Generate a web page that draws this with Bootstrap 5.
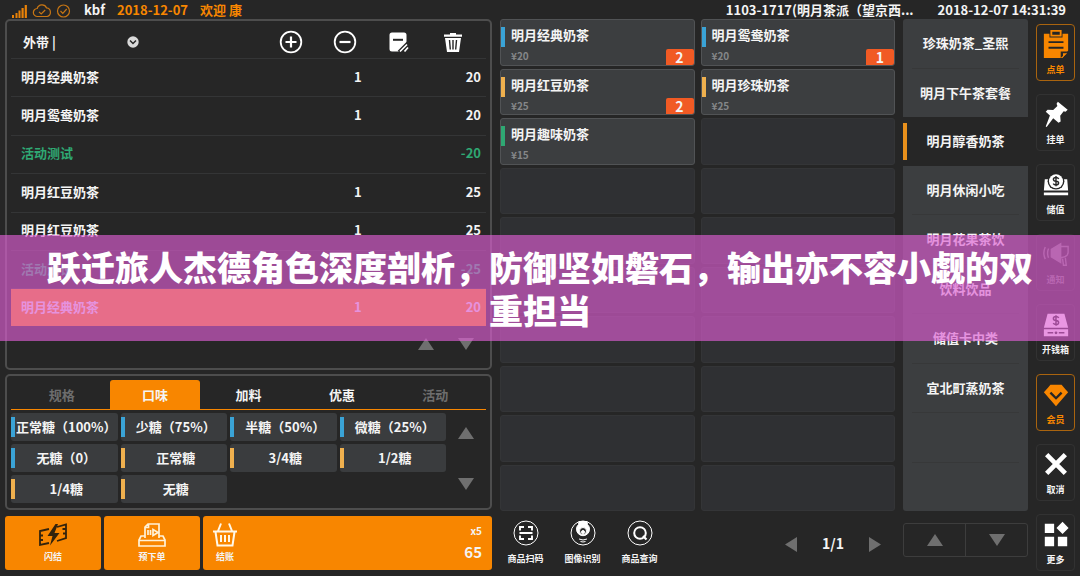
<!DOCTYPE html>
<html lang="zh-CN">
<head>
<meta charset="utf-8">
<meta name="viewport" content="width=device-width, initial-scale=1">
<title>明月茶派 收银台</title>
<link href="https://cdn.jsdelivr.net/npm/bootstrap@5.3.0/dist/css/bootstrap.min.css" rel="stylesheet">
<style>
  :root { --ink:#262626; --tile:#3c3e40; --slot:#2f3033; --line:#343536; --orange:#f88600; --blue:#3aa3d6; --amber:#efb04e; --green:#2fa873; }
  body { background:var(--ink); color:#f4f4f4; font:700 13px/18px "Noto Sans CJK SC", sans-serif; height:100vh; min-height:560px; overflow:hidden; }
  button { font-weight:inherit; color:inherit; }
  .btn { --bs-btn-color:#f4f4f4; --bs-btn-hover-color:#fff; --bs-btn-font-size:13px; --bs-btn-line-height:18px; --bs-btn-font-weight:700; --bs-btn-padding-x:0; --bs-btn-padding-y:0; --bs-btn-border-radius:3px; --bs-btn-border-width:0; white-space:nowrap; }
  .topbar { height:19px; padding:0 14px 0 12px; line-height:20px; }
  .orange { color:var(--orange); }
  .till { display:grid; grid-template-columns:487fr 395fr 125fr 39px; gap:8px; padding:0 5px 6px; }
  .panel { border:2px solid #4d4d4d; border-radius:5px; }
  /* order list */
  .order-head { height:38px; margin:0 4px; padding:4px 6px 0 0; border-bottom:1px solid var(--line); }
  .order-head .tool { width:54px; }
  .mode { width:128px; padding-left:12px; }
  .order-list { margin:0 4px; }
  .order-list table { width:100%; height:100%; border-collapse:separate; border-spacing:0; }
  .order-list td { border-bottom:1px solid var(--line); padding:0 5px 2px 10px; }
  .order-list .qty { width:20%; text-align:center; padding:0 0 2px; }
  .order-list .sum { width:17%; text-align:right; }
  .order-list .promo td { color:var(--green); }
  .order-list .picked td { background:#fa8900; border-bottom:0; }
  .order-foot { height:42px; padding:0 4px 6px 0; }
  .order-foot .btn { width:40px; height:18px; line-height:0; }
  .tri { fill:#6f6f6f; }
  /* options */
  .options { padding:4px 4px 5px; }
  .tabs { border-bottom:1px solid var(--orange); padding:0 4px; }
  .tabs .btn { flex:1 1 0; height:29px; margin:0 2px; border-radius:3px 3px 0 0; }
  .tabs .dim { color:#6d6d6d; }
  .tabs .on { background:var(--orange); }
  .choices { display:grid; grid-template-columns:repeat(4,1fr); gap:3px; margin-top:3px; }
  .choices .btn { height:28px; padding-left:4px; background:linear-gradient(var(--c),var(--c)) 0 50%/4px 20px no-repeat #3a3c3e; }
  .arrows { width:40px; padding:17px 0 13px; }
  .arrows .btn { line-height:0; }
  .blue { --c:var(--blue); } .amber { --c:var(--amber); } .green { --c:var(--green); }
  /* payment buttons */
  .pay { display:grid; grid-template-columns:96fr 96fr 289fr; gap:3px; height:54px; margin-top:6px; }
  .pay .btn { background:var(--orange); }
  .pay svg { margin-bottom:2px; }
  .pay .checkout { padding:0 10px 0 9px; }
  .tiny, .btn.tiny { font-size:9px; line-height:14px; }
  .total { font-size:15px; line-height:20px; padding-top:4px; }
  .count { font-size:10px; line-height:14px; }
  /* goods */
  .goods { display:grid; grid-template-columns:1fr 1fr; grid-template-rows:repeat(10,1fr); gap:3px 6px; }
  .slot { background:var(--slot); border:1px solid #343537; border-radius:3px; min-height:0; }
  .slot.item { background:linear-gradient(var(--c),var(--c)) 0 7px/4px 20px no-repeat var(--tile); border-color:#515355; padding:5px 10px 1px; text-align:left; position:relative; }
  .slot.item span { display:block; }
  .price { color:#858789; font-size:10px; line-height:12px; padding-top:6px; }
  .slot .tally { position:absolute; right:0; bottom:0; width:28px; height:16px; background:#f15a24; border-radius:2px 2px 2px 0; text-align:center; font-size:14px; line-height:17px; }
  .foot { height:59px; }
  .scans { gap:6px; padding-top:5px; }
  .scans .btn { width:51px; }
  .scans svg { margin-bottom:6px; }
  .pager { font-size:14px; padding:5px 14px 0 0; gap:25px; }
  /* categories */
  .cats { background:var(--tile); border-radius:3px; }
  .cats > * { flex:1 1 0; border-radius:0; }
  .cats .btn { --bs-btn-border-radius:0; }
  .cats .rule { border-bottom:1px solid #373839; margin:0 9px; }
  .cats .on { background:linear-gradient(#e8901c,#e8901c) 0 50%/4px 37px no-repeat var(--ink); }
  .updown { border:1px solid #3d3d3d; border-radius:3px; height:34px; margin-top:12px; }
  .updown .btn { border-radius:0; line-height:0; }
  .updown .btn + .btn { border-left:1px solid #3d3d3d; }
  /* side tools */
  .side { gap:13px; margin:5px 0 -1px; }
  .side .btn { flex:1 1 0; border:1px solid #323232; border-radius:4px; padding-top:2px; }
  .side .hot { border-color:#a9640f; color:var(--orange); }
  .side svg { width:28px; height:28px; display:block; margin:0 auto 5px; }
  .side .muted { color:#777; }
  /* headline ribbon laid across the till */
  .ribbon { position:absolute; left:0; right:0; top:50%; transform:translateY(-50%); background:rgba(221,93,210,.65); color:#fff; font-size:34px; line-height:43px; padding:10px 38px; text-align:center; font-weight:900; }
</style>
</head>
<body class="d-flex flex-column position-relative">
<header class="topbar d-flex align-items-center flex-shrink-0">
  <svg width="60" height="16" viewBox="0 0 60 16" fill="none" stroke="#c77614" stroke-width="1.2" aria-hidden="true">
    <g fill="#e98208" stroke="none"><path d="M0 13h2v3H0zM3.500 11h2v5h-2zM6.500 8.500h2V16h-2zM9.500 6h2.200v10H9.500zM12.700 3h2.200v13h-2.200z"/></g>
    <path d="M25.500 14.500a4 4 0 0 1-.3-8 5 5 0 0 1 9.400-.6 4.400 4.400 0 0 1 .6 8.600zM27 9.800l2.200 2.200 4-4"/>
    <circle cx="51.500" cy="9" r="6"/><path d="M48.500 9l2.300 2.300 3.900-4.300"/>
  </svg>
  <span class="ms-2 ps-1">kbf</span>
  <span class="orange ms-2 ps-1">2018-12-07</span>
  <span class="orange ms-2 ps-1">欢迎 康</span>
  <span class="text-nowrap ms-auto me-4">1103-1717(明月茶派（望京西...</span>
  <time>2018-12-07 14:31:39</time>
</header>

<main class="till flex-grow-1">
  <section class="d-flex flex-column">
    <div class="panel d-flex flex-column flex-grow-1">
      <div class="order-head d-flex align-items-center">
        <button class="mode btn d-flex align-items-center justify-content-between">外带 |
          <svg width="12" height="12" viewBox="0 0 12 12"><circle cx="6" cy="6" r="5.700" fill="#dadada"/><path d="M3 4.500l3 3 3-3" fill="none" stroke="#262626" stroke-width="1.500"/></svg>
        </button>
        <div class="ms-auto d-flex">
          <button class="btn tool" aria-label="加"><svg width="24" height="24" viewBox="0 0 24 24" fill="none" stroke="#fff" stroke-width="1.800"><circle cx="12" cy="12" r="10.300"/><path d="M12 6.500v11M6.500 12h11" stroke-width="2.200"/></svg></button>
          <button class="btn tool" aria-label="减"><svg width="24" height="24" viewBox="0 0 24 24" fill="none" stroke="#fff" stroke-width="1.800"><circle cx="12" cy="12" r="10.300"/><path d="M6.500 12h11" stroke-width="2.200"/></svg></button>
          <button class="btn tool" aria-label="备注"><svg width="24" height="24" viewBox="0 0 24 24"><path d="M5 2.500h12a2.500 2.500 0 0 1 2.500 2.500v8.500L12 21.500H5A2.500 2.500 0 0 1 2.500 19V5A2.500 2.500 0 0 1 5 2.500z" fill="#fff"/><path d="M6 9.800h10" stroke="#262626" stroke-width="2"/><path d="M12 22l9-9" stroke="#262626" stroke-width="3.500"/><path d="M13 21.500l7-7M17.500 21.500l3.500-4" stroke="#fff" stroke-width="1.700"/></svg></button>
          <button class="btn tool" aria-label="删除"><svg width="24" height="24" viewBox="0 0 24 24"><path d="M3 4.500h6V3h6v1.500h6v2.200H3zM4 8h16l-2 14H6z" fill="#fff"/><path d="M8.500 10l.8 9.500M12 10v9.500M15.500 10l-.8 9.500" stroke="#262626" stroke-width="1.400"/></svg></button>
        </div>
      </div>
      <div class="order-list flex-grow-1">
        <table>
          <tr><td>明月经典奶茶</td><td class="qty">1</td><td class="sum">20</td></tr>
          <tr><td>明月鸳鸯奶茶</td><td class="qty">1</td><td class="sum">20</td></tr>
          <tr class="promo"><td>活动测试</td><td class="qty"></td><td class="sum">-20</td></tr>
          <tr><td>明月红豆奶茶</td><td class="qty">1</td><td class="sum">25</td></tr>
          <tr><td>明月红豆奶茶</td><td class="qty">1</td><td class="sum">25</td></tr>
          <tr class="promo"><td>活动测试</td><td class="qty"></td><td class="sum">-25</td></tr>
          <tr class="picked"><td>明月经典奶茶</td><td class="qty">1</td><td class="sum">20</td></tr>
        </table>
      </div>
      <div class="order-foot d-flex justify-content-end align-items-center">
        <button class="btn" aria-label="上一页"><svg class="tri" width="16" height="12"><path d="M8 0l8 12H0z"/></svg></button>
        <button class="btn" aria-label="下一页"><svg class="tri" width="16" height="12"><path d="M0 0h16L8 12z"/></svg></button>
      </div>
    </div>

    <div class="panel options mt-1">
      <div class="tabs d-flex">
        <button class="btn dim">规格</button><button class="btn on">口味</button><button class="btn">加料</button><button class="btn">优惠</button><button class="btn dim">活动</button>
      </div>
      <div class="d-flex">
        <div class="choices flex-grow-1">
          <button class="btn blue">正常糖（100%）</button><button class="btn blue">少糖（75%）</button><button class="btn blue">半糖（50%）</button><button class="btn blue">微糖（25%）</button>
          <button class="btn blue">无糖（0）</button><button class="btn amber">正常糖</button><button class="btn amber">3/4糖</button><button class="btn amber">1/2糖</button>
          <button class="btn amber">1/4糖</button><button class="btn amber">无糖</button>
        </div>
        <div class="arrows d-flex flex-column justify-content-between">
          <button class="btn" aria-label="上"><svg class="tri" width="16" height="12"><path d="M8 0l8 12H0z"/></svg></button>
          <button class="btn" aria-label="下"><svg class="tri" width="16" height="12"><path d="M0 0h16L8 12z"/></svg></button>
        </div>
      </div>
    </div>

    <div class="pay">
      <button class="btn tiny">
        <svg class="d-block mx-auto" width="30" height="26" viewBox="0 0 30 26" fill="none" stroke="#33230c" stroke-width="1.800"><path d="M11 7L2 9v14l9-2M2 13.500h3M2 18h3M19 5l9-2.500v13.500l-9 3M28 7h-3.500M28 11.500h-3"/><path d="M17.500 2L9.500 14h5l-2.500 9.500L21.500 11h-5L20 2z" fill="#33230c" stroke="none"/></svg>闪结</button>
      <button class="btn tiny">
        <svg class="d-block mx-auto" width="30" height="26" viewBox="0 0 30 26" fill="none" stroke="#fff2d8" stroke-width="1.700"><path d="M8 16V5l3-3h11v14M8 14H4l-2 4v6h26v-6l-2-4h-4M2 18.500h26M8 5.500h3.500V2M11 8v5M13.500 8v5M16 7.500v6l5-3z"/></svg>预下单</button>
      <button class="btn tiny checkout d-flex justify-content-between">
        <span class="align-self-center"><svg class="d-block mx-auto" width="26" height="26" viewBox="0 0 26 26" fill="none" stroke="#fff8e8" stroke-width="2"><path d="M9 1.500L6 9M17 1.500L20 9M1 9.500h24M3.500 10l2 13.500h15l2-13.500M9 13v7M13 13v7M17 13v7"/></svg>结账</span>
        <span class="d-flex flex-column align-items-end align-self-center"><span class="count">x5</span><span class="total">65</span></span>
      </button>
    </div>
  </section>

  <section class="d-flex flex-column">
    <div class="goods flex-grow-1">
      <button class="slot item blue"><span>明月经典奶茶</span><span class="price">¥20</span><span class="tally">2</span></button>
      <button class="slot item blue"><span>明月鸳鸯奶茶</span><span class="price">¥20</span><span class="tally">1</span></button>
      <button class="slot item amber"><span>明月红豆奶茶</span><span class="price">¥25</span><span class="tally">2</span></button>
      <button class="slot item amber"><span>明月珍珠奶茶</span><span class="price">¥25</span></button>
      <button class="slot item green"><span>明月趣味奶茶</span><span class="price">¥15</span></button>
      <div class="slot"></div>
      <div class="slot"></div><div class="slot"></div>
      <div class="slot"></div><div class="slot"></div>
      <div class="slot"></div><div class="slot"></div>
      <div class="slot"></div><div class="slot"></div>
      <div class="slot"></div><div class="slot"></div>
      <div class="slot"></div><div class="slot"></div>
      <div class="slot"></div><div class="slot"></div>
    </div>
    <div class="foot d-flex align-items-center">
      <div class="scans d-flex">
        <button class="btn tiny"><svg class="d-block mx-auto" width="26" height="26" viewBox="0 0 26 26" fill="none" stroke="#fff"><circle cx="13" cy="13" r="12"/><path d="M7 10.500V7h4M15 7h4v3.500M7 15.500V19h4M15 19h4v-3.500M6.500 13h13" stroke-width="1.900"/></svg>商品扫码</button>
        <button class="btn tiny"><svg class="d-block mx-auto" width="26" height="26" viewBox="0 0 26 26" fill="none" stroke="#fff"><circle cx="13" cy="13" r="12"/><path d="M9 1.500h8l.5 3a6.500 6.500 0 1 1-9 0z" fill="#fff"/><circle cx="13" cy="11" r="3.500" fill="#262626"/><circle cx="13" cy="12" r="1.500" fill="#fff"/><path d="M9 19q4 2 8 0M10.500 21.500q2.500 1 5 0"/></svg>图像识别</button>
        <button class="btn tiny"><svg class="d-block mx-auto" width="26" height="26" viewBox="0 0 26 26" fill="none" stroke="#fff"><circle cx="13" cy="13" r="12"/><circle cx="13" cy="13" r="5.800" stroke-width="2"/><path d="M16 16l3.500 3.500" stroke-width="2.200"/></svg>商品查询</button>
      </div>
      <div class="pager ms-auto d-flex align-items-center">
        <button class="btn" aria-label="上一页"><svg class="tri" width="12" height="15"><path d="M12 0v15L0 7.500z"/></svg></button>
        <span>1/1</span>
        <button class="btn" aria-label="下一页"><svg class="tri" width="12" height="15"><path d="M0 0v15l12-7.500z"/></svg></button>
      </div>
    </div>
  </section>

  <section class="d-flex flex-column">
    <nav class="cats d-flex flex-column flex-grow-1">
      <button class="btn rule">珍珠奶茶_圣熙</button>
      <button class="btn">明月下午茶套餐</button>
      <button class="btn on">明月醇香奶茶</button>
      <button class="btn rule">明月休闲小吃</button>
      <button class="btn rule">明月花果茶饮</button>
      <button class="btn rule">饮料饮品</button>
      <button class="btn rule">储值卡中类</button>
      <button class="btn rule">宜北町蒸奶茶</button>
      <div class="rule"></div>
      <div></div>
    </nav>
    <div class="foot">
      <div class="updown d-flex">
        <button class="btn flex-fill" aria-label="上翻"><svg class="tri" width="16" height="12"><path d="M8 0l8 12H0z"/></svg></button>
        <button class="btn flex-fill" aria-label="下翻"><svg class="tri" width="16" height="12"><path d="M0 0h16L8 12z"/></svg></button>
      </div>
    </div>
  </section>

  <nav class="side d-flex flex-column">
    <button class="btn tiny hot"><svg viewBox="0 0 30 30"><path d="M2 4h6v4h14V4h6v18l-6 8H2z" fill="#f88600"/><path d="M10 1h10v5H10z" fill="none" stroke="#f88600" stroke-width="2"/><path d="M7 13h16M7 19h16" stroke="#262626" stroke-width="2"/><path d="M20 30v-7h8z" fill="#262626"/><path d="M22.500 29v-4h4.500z" fill="#f88600"/></svg>点单</button>
    <button class="btn tiny"><svg viewBox="0 0 30 30"><path d="M17 2l10.500 8.500-2.300 2-2-.5-3.700 5 .5 6-2.300 1.500-5.700-5L5 29l-1-.500 4.500-12L4 12.500l2-2 6 .2 4.500-4.200-.9-2.500z" fill="#fff"/></svg>挂单</button>
    <button class="btn tiny"><svg viewBox="0 0 30 30"><path d="M3 10h24l1 12H2zM2 24h26v3H2z" fill="#fff"/><circle cx="15" cy="12" r="9" fill="#262626"/><circle cx="15" cy="12" r="7.500" fill="#fff"/><path d="M18 9.500q-1-1.500-3-1.500-2.800 0-2.800 2t2.800 2 2.800 2-2.800 2q-2 0-3-1.500M15 6.500v11" fill="none" stroke="#262626" stroke-width="1.500"/></svg>储值</button>
    <button class="btn tiny muted"><svg viewBox="0 0 30 30" fill="none" stroke="#777" stroke-width="1.500"><path d="M10 10l10-6v20l-10-6z" fill="#777"/><path d="M20 7h8v6q0 5-8 6M22 20l1 7h3l-1-8M7 9q-2 5 0 10M3.500 7.500q-3 6.500 0 13"/></svg>通知</button>
    <button class="btn tiny"><svg viewBox="0 0 30 30"><path d="M6 4h18l4 15H2zM2 20.500h26V28H2z" fill="#fff"/><path d="M18 8.500q-1-1.500-3-1.500-2.800 0-2.800 2t2.800 2.200T17.800 13.500 15 15.500q-2 0-3-1.500M15 5.500v11.500M6 24.500h6M18 24.500h6" fill="none" stroke="#262626" stroke-width="1.600"/><circle cx="15" cy="24.500" r="1.500" fill="#262626"/></svg>开钱箱</button>
    <button class="btn tiny hot"><svg viewBox="0 0 30 30"><path d="M9 5h12q4 5 7 8L15 28 2 13q4-4 7-8z" fill="#f88600"/><path d="M9 13.500l6 6 6-6" fill="none" stroke="#262626" stroke-width="2.500"/></svg>会员</button>
    <button class="btn tiny"><svg viewBox="0 0 30 30"><path d="M5 5l20 20M25 5L5 25" stroke="#fff" stroke-width="5"/></svg>取消</button>
    <button class="btn tiny"><svg viewBox="0 0 30 30" fill="#fff"><path d="M3 4h10v10H3zM22 2l6.500 6.500L22 15l-6.500-6.500zM3 18h10v10H3zM17 18h10v10H17z"/></svg>更多</button>
  </nav>
</main>

<h1 class="ribbon mb-0">跃迁旅人杰德角色深度剖析，防御坚如磐石，输出亦不容小觑的双重担当</h1>
<script src="https://cdn.jsdelivr.net/npm/bootstrap@5.3.0/dist/js/bootstrap.bundle.min.js"></script>
</body>
</html>
